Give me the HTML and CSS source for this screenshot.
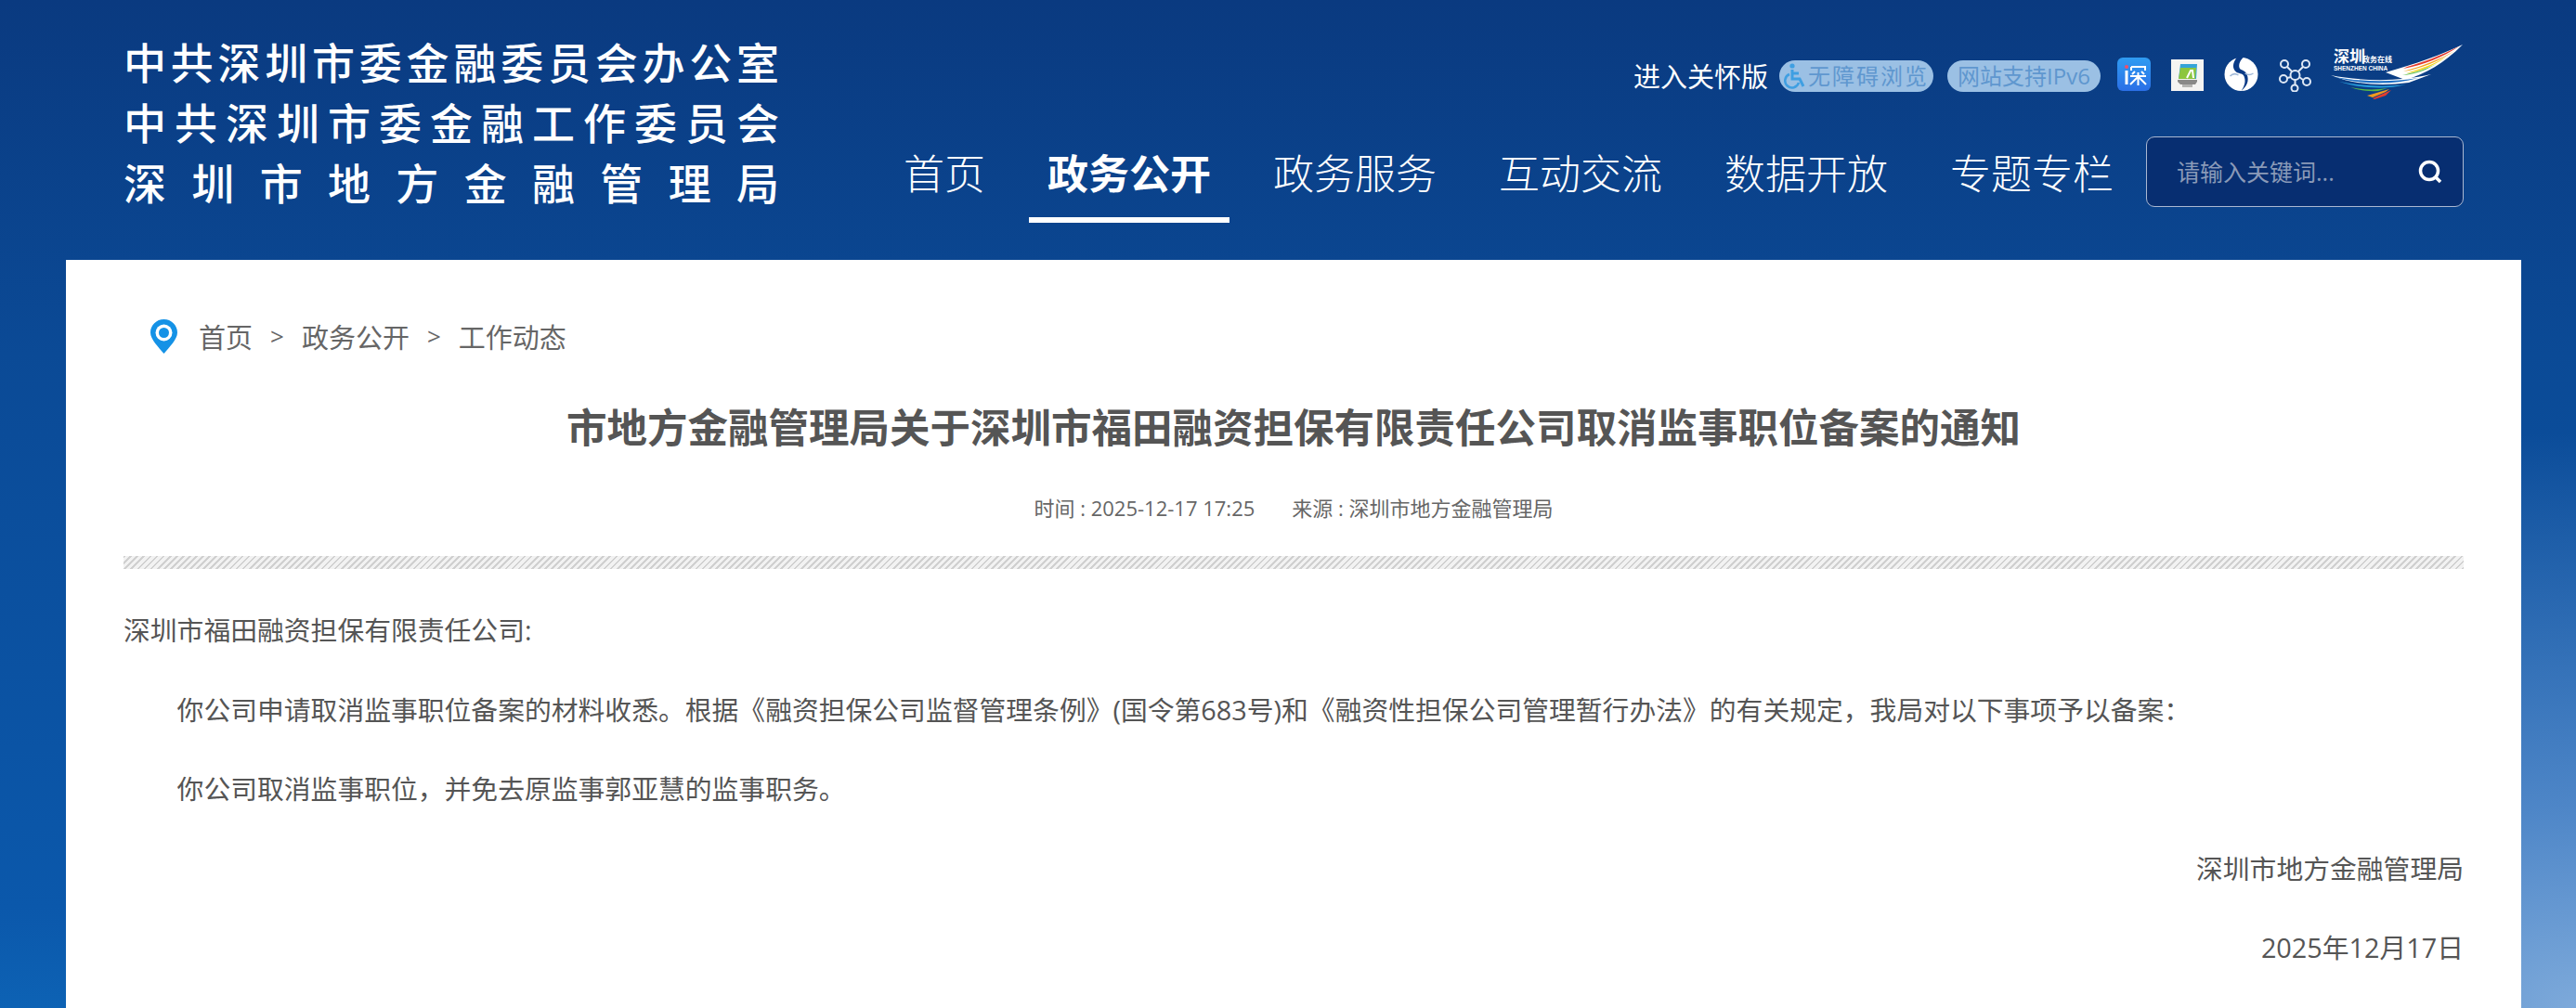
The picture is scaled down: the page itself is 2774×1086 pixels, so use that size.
FILE: index.html
```html
<!DOCTYPE html>
<html lang="zh-CN">
<head>
<meta charset="utf-8">
<title>市地方金融管理局关于深圳市福田融资担保有限责任公司取消监事职位备案的通知</title>
<link rel="stylesheet" href="styles.css">
</head>
<body>
<header class="site-header">
  <div class="brand">
    <div class="brand-line brand-line-a">中共深圳市委金融委员会办公室</div>
    <div class="brand-line">中共深圳市委金融工作委员会</div>
    <div class="brand-line">深圳市地方金融管理局</div>
  </div>
  <div class="header-right">
    <div class="toolbar">
      <a class="care">进入关怀版</a>
      <a class="pill pill-access">
        <svg class="wheel" viewBox="0 0 24 28" aria-hidden="true"><circle cx="9" cy="3" r="2.6" fill="#3f9fe2"/><path d="M9 7v10h8l4 8M9 11h7" fill="none" stroke="#3f9fe2" stroke-width="3"/><path d="M6 12a7.5 7.5 0 1 0 10 9" fill="none" stroke="#3f9fe2" stroke-width="2.6"/></svg>
        <span>无障碍浏览</span>
      </a>
      <a class="pill pill-ipv6">网站支持IPv6</a>
      <svg class="ico ico-read" viewBox="0 0 36 36" aria-hidden="true">
        <defs><linearGradient id="rd" x1="0" y1="0" x2="0" y2="1"><stop offset="0" stop-color="#2f9cf2"/><stop offset="1" stop-color="#2b6fe6"/></linearGradient></defs>
        <rect width="36" height="36" rx="6" fill="url(#rd)"/>
        <circle cx="10" cy="10" r="2" fill="#f0506a"/>
        <rect x="8.500" y="14" width="3" height="15" fill="#fff"/>
        <path d="M15 10h15v4M15 10v4M19 15l-3 3M26 15l3 3M14 20h17M22.500 16v14M22 21l-8 8M23 21l8 8" fill="none" stroke="#fff" stroke-width="2"/>
      </svg>
      <svg class="ico ico-screen" viewBox="0 0 35 34" aria-hidden="true">
        <rect width="35" height="34" fill="#f4f4f2"/>
        <path d="M10 5h18l-1 16H8z" fill="#35a4d8"/>
        <path d="M10 9h17l-1 12H8z" fill="#8cc63e"/>
        <path d="M17 20l4-8h2l1 8" fill="none" stroke="#fff" stroke-width="2"/>
        <path d="M7 22h21v2l-2 3H10l-3-3z" fill="#8a8a88"/>
        <path d="M12 27h11v3H12z" fill="#b5b5b2"/>
      </svg>
      <svg class="ico ico-swirl" viewBox="0 0 36 36" aria-hidden="true">
        <circle cx="18" cy="18" r="18" fill="#fff"/>
        <path d="M13 0c-4 6-5 11-1 15 3 3 7 1 9 5 2 5 1 10-3 16 6-5 9-11 6-18-2-5-7-4-8-7-1-4 1-8 4-11z" fill="#0a3a86"/>
        <path d="M6 20c3-3 6-3 9-1M22 17c3 2 6 2 9 0" fill="none" stroke="#9fb8d8" stroke-width="1.500"/>
      </svg>
      <svg class="ico ico-net" viewBox="0 0 35 36" aria-hidden="true">
        <g fill="none" stroke="#dfe8f5" stroke-width="2">
          <circle cx="17.500" cy="18" r="5"/>
          <circle cx="6" cy="6" r="4"/><circle cx="29" cy="6" r="4"/>
          <circle cx="5" cy="22" r="4"/><circle cx="30" cy="25" r="4"/>
          <circle cx="17" cy="32" r="3.500"/>
          <path d="M9 9l5 5M26 9l-5 5M9 21l4-1M26 23l-4-3M17.500 23v6"/>
        </g>
      </svg>
      <svg class="ico ico-sz" viewBox="0 0 144 60" aria-hidden="true">
        <path d="M0 36l62-6 82-30-40 40-56 20-18-10z" fill="#fff" opacity=".0"/>
        <path d="M60 31C92 22 120 12 143 1c-20 20-40 32-62 38z" fill="#fff"/>
        <path d="M139 3c-20 10-38 17-56 22l-4 2c22-4 42-12 60-24z" fill="#e33b2e"/>
        <path d="M134 8c-16 9-34 16-52 21l-3 1c20-3 38-11 55-22z" fill="#f6a21c"/>
        <path d="M126 14c-14 8-28 13-44 18 17-2 31-9 44-18z" fill="#f7d51d"/>
        <path d="M116 21c-11 6-24 10-38 13 15-1 27-6 38-13z" fill="#56b947"/>
        <path d="M1 34c30 6 70 8 108-1l-24 9C55 46 25 44 1 34z" fill="#fff"/>
        <path d="M5 36c28 5 60 6 90 1-28 8-62 7-90-1z" fill="#1d6fc4"/>
        <path d="M10 41c24 5 50 6 72 3-22 6-50 4-72-3z" fill="#29a3e0"/>
        <path d="M22 47c14 3 28 3 40 1l-10 3c-11 1-21-1-30-4z" fill="#56b947"/>
        <path d="M40 56l24-7-4 3-14 6z" fill="#f29a1f"/><path d="M46 59l20-9-6 6-12 4z" fill="#e33b2e"/>
        <text class="sz-cn" x="4" y="20">深圳</text>
        <text class="sz-small" x="35" y="20">政务在线</text>
        <text class="sz-en" x="4" y="29">SHENZHEN CHINA</text>
      </svg>
    </div>
    <div class="nav-row">
      <nav class="nav">
        <a class="nav-item">首页</a>
        <a class="nav-item is-active">政务公开</a>
        <a class="nav-item">政务服务</a>
        <a class="nav-item">互动交流</a>
        <a class="nav-item">数据开放</a>
        <a class="nav-item">专题专栏</a>
      </nav>
      <form class="search">
        <input class="search-input" type="text" placeholder="请输入关键词...">
        <svg class="search-icon" viewBox="0 0 26 26" aria-hidden="true"><circle cx="12" cy="12" r="9.500" fill="none" stroke="#fff" stroke-width="3.500"/><path d="M18 18l6 6" stroke="#fff" stroke-width="3.500"/></svg>
      </form>
    </div>
  </div>
</header>
<main class="card">
  <div class="crumbs">
    <svg class="pin" viewBox="0 0 29 37" aria-hidden="true"><path d="M14.500 0C6.500 0 0 6.300 0 14.200 0 22 9 30 14.500 37 20 30 29 22 29 14.200 29 6.300 22.500 0 14.500 0z" fill="#1592e6"/><circle cx="14.500" cy="14.500" r="9" fill="#fff"/><circle cx="14.500" cy="14.500" r="5.500" fill="#1592e6"/></svg>
    <a>首页</a><span class="sep">&gt;</span><a>政务公开</a><span class="sep">&gt;</span><a>工作动态</a>
  </div>
  <h1 class="title">市地方金融管理局关于深圳市福田融资担保有限责任公司取消监事职位备案的通知</h1>
  <div class="meta"><span>时间 : 2025-12-17 17:25</span><span>来源 : 深圳市地方金融管理局</span></div>
  <div class="hatch"></div>
  <article class="body">
    <p>深圳市福田融资担保有限责任公司:</p>
    <p class="indent">你公司申请取消监事职位备案的材料收悉。根据《融资担保公司监督管理条例》(国令第683号)和《融资性担保公司管理暂行办法》的有关规定，我局对以下事项予以备案：</p>
    <p class="indent">你公司取消监事职位，并免去原监事郭亚慧的监事职务。</p>
    <p class="right">深圳市地方金融管理局</p>
    <p class="right">2025年12月17日</p>
  </article>
</main>
</body>
</html>
```
FILE: styles.css
```css
* { box-sizing: border-box; }
html, body { margin: 0; height: 1086px; overflow: hidden; }
body {
  font-family: "Open Sans", "Noto Sans CJK SC", sans-serif;
  color: #555;
  background:
    radial-gradient(900px 620px at 100% 100%, #7da9da 0%, rgba(100,150,210,.75) 35%, rgba(11,80,160,0) 100%),
    linear-gradient(180deg, #0a3a80 0%, #0b4a96 35%, #0b58ab 90%, #0d62b4 100%);
}
.site-header {
  height: 280px;
  padding: 0 121px 0 133px;
  display: flex;
  justify-content: space-between;
}
.brand { width: 706px; padding-top: 35px; color: #fff; font-weight: 500; font-size: 46px; line-height: 65px; }
.brand-line { text-align: justify; text-align-last: justify; white-space: nowrap; }

.header-right { display: flex; flex-direction: column; align-items: flex-end; }
.toolbar { height: 147px; display: flex; align-items: flex-start; padding-top: 47px; }
.care { color: #fff; font-size: 29px; line-height: 34px; margin-top: 19px; margin-right: 12px; }
.pill {
  height: 34px; margin-top: 18px; border-radius: 17px; background: #9bc0e4; color: #5f97cf;
  display: flex; align-items: center; justify-content: center; font-size: 24px; line-height: 34px; white-space: nowrap;
}
.pill-access { width: 166px; margin-right: 15px; gap: 2px; letter-spacing: 2px; }
.pill-ipv6 { width: 165px; margin-right: 18px; }
.wheel { width: 24px; height: 28px; flex: none; }
.ico { display: block; flex: none; }
.ico-read { width: 36px; height: 36px; margin-top: 15px; margin-right: 22px; }
.ico-screen { width: 35px; height: 34px; margin-top: 17px; margin-right: 22px; }
.ico-swirl { width: 37px; height: 36px; margin-top: 15px; margin-right: 22px; }
.ico-net { width: 35px; height: 36px; margin-top: 16px; margin-right: 20px; }
.ico-sz { width: 144px; height: 60px; }
.sz-cn { font-size: 17px; font-weight: 700; fill: #fff; }
.sz-small { font-size: 8px; font-weight: 700; fill: #fff; }
.sz-en { font-size: 6.500px; font-weight: 600; fill: #fff; font-family: "Liberation Sans", sans-serif; }

.nav-row { display: flex; align-items: flex-start; }
.nav { display: flex; gap: 27px; margin-right: 15px; }
.nav-item {
  height: 93px; padding: 10px 20px 0; color: #fff; font-size: 44px; line-height: 60px;
  white-space: nowrap; font-weight: 300;
}
.nav-item.is-active { font-weight: 700; border-bottom: 6px solid #fff; }
.search {
  width: 342px; height: 76px; border: 1px solid #aab8d2; border-radius: 9px; background: #072e71;
  display: flex; align-items: center; padding: 0 22px 0 30px;
}
.search-input {
  flex: 1; min-width: 0; border: 0; outline: 0; background: transparent; color: #fff;
  font: 25px "Open Sans", "Noto Sans CJK SC", sans-serif;
}
.search-input::placeholder { color: #8a9ab8; opacity: 1; }
.search-icon { width: 26px; height: 26px; flex: none; }

.card {
  width: 2644px; height: 806px; margin-left: 71px; padding: 0 62px; background: #fff;
}
.crumbs {
  height: 64px; margin-top: 0; padding: 50px 0 0 29px; box-sizing: content-box;
  display: flex; align-items: center; font-size: 29px; color: #666;
}
.pin { width: 29px; height: 37px; margin-right: 23px; }
.sep { margin: 0 19px; font-size: 26px; }
.title { margin: 36px 0 0; text-align: center; font-size: 43.500px; line-height: 62px; font-weight: 700; color: #555; }
.meta { margin-top: 40px; display: flex; justify-content: center; gap: 40px; font-size: 22px; line-height: 30px; color: #666; }
.hatch {
  height: 14px; margin-top: 37px;
  background: repeating-linear-gradient(-45deg, #d0d0d0 0 2px, #f2f2f2 2px 5px);
}
.body { margin-top: 44px; font-size: 28.800px; line-height: 44px; color: #555; }
.body p { margin: 0 0 41.600px; }
.indent { text-indent: 2em; }
.right { text-align: right; }
```
